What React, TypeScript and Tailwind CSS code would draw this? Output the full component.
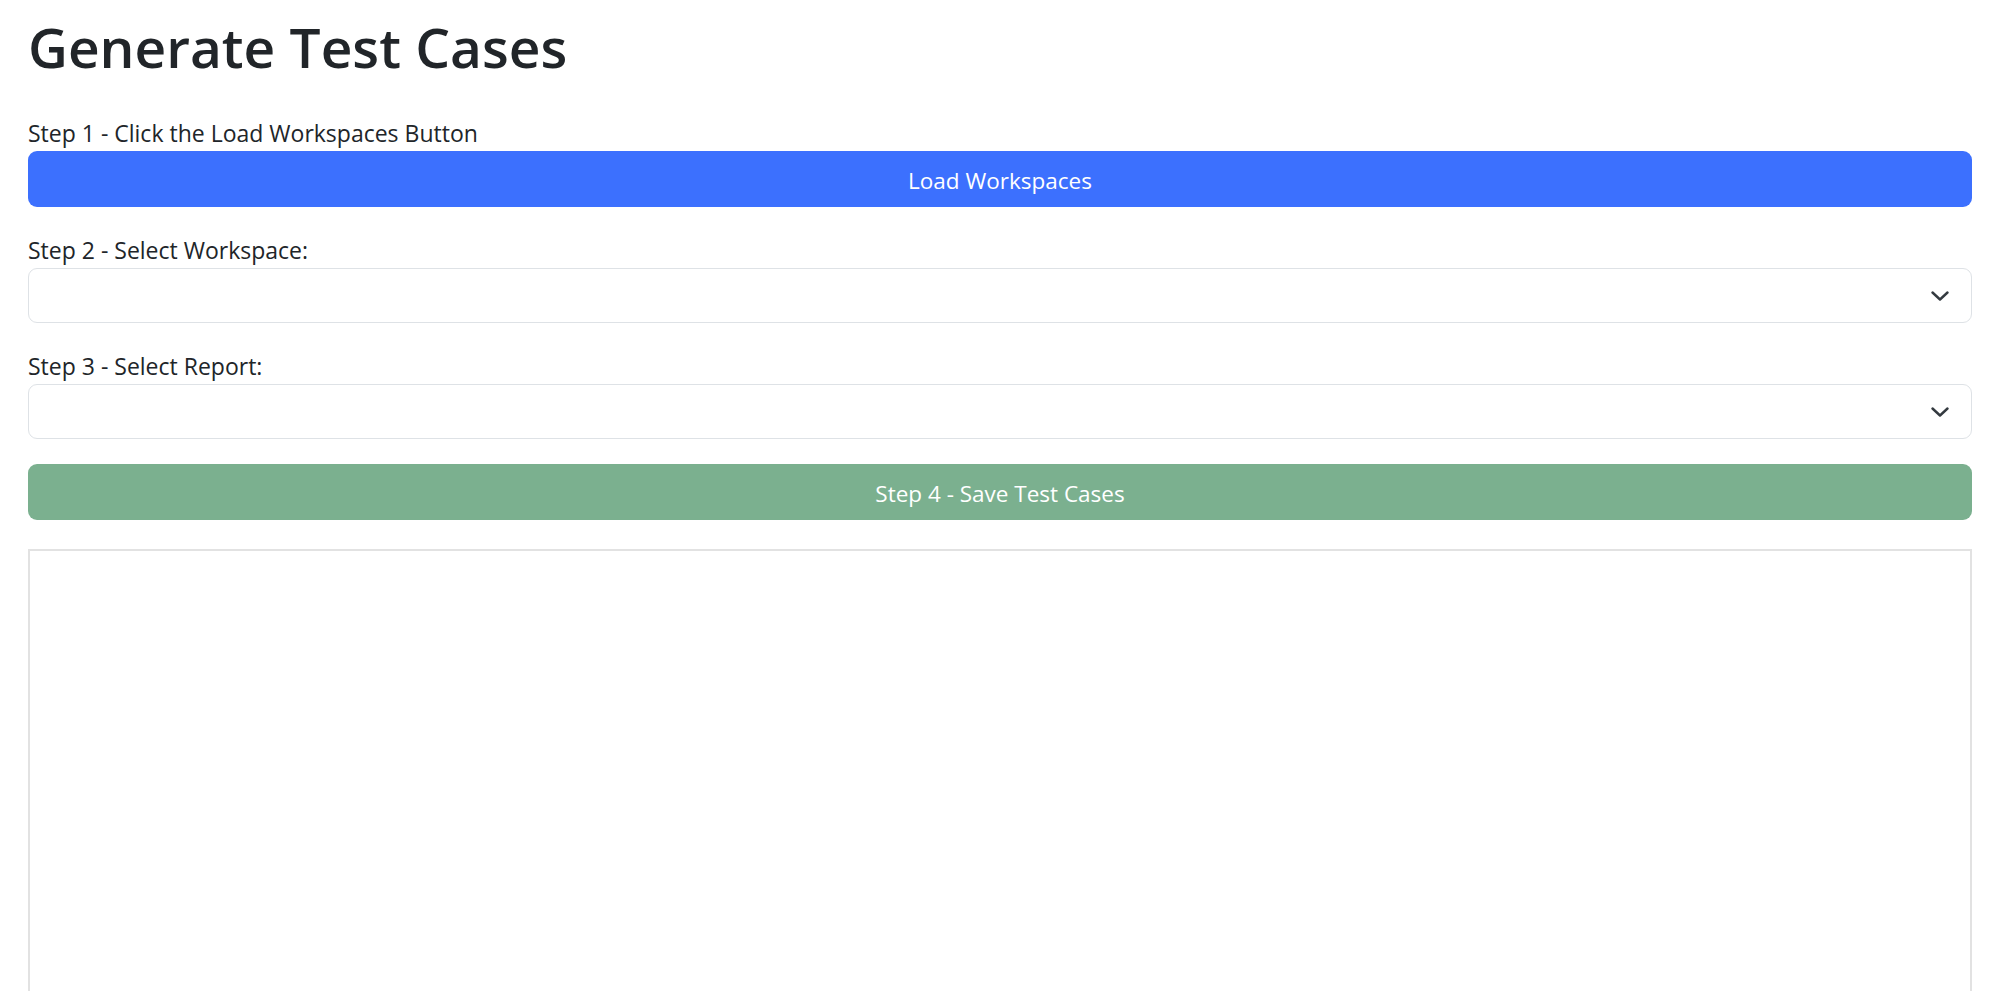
import React from "react";

function Chevron() {
	return (
		<svg width="18" height="10" viewBox="0 0 18 10" fill="none" className="shrink-0">
			<path d="M1.5 1.5 9 8.5l7.5-7" stroke="#343a40" strokeWidth="2.4" strokeLinecap="round" strokeLinejoin="round" />
		</svg>
	);
}

function SelectBox({ label }: { label: string }) {
	return (
		<div className="mt-[25px]">
			<div className="text-[23px] leading-[36px] text-[#212529]">{label}</div>
			<div className="h-[55px] border border-[#dee2e6] rounded-[9px] bg-white flex items-center justify-end pr-[22px]">
				<Chevron />
			</div>
		</div>
	);
}

export default function App() {
	return (
		<div className="min-h-screen bg-white font-['Open_Sans',sans-serif] text-[#212529]">
			<div className="ml-[28px] w-[1944px]">
				<h1 className="pt-[11px] text-[55px] leading-[72px] font-semibold text-[#212529]">
					Generate Test Cases
				</h1>
				<div className="mt-[32px]">
					<div className="text-[23px] leading-[36px]">
						Step 1 - Click the Load Workspaces Button
					</div>
					<button className="w-full h-[56px] pt-[3px] rounded-[9px] bg-[#3c70fe] text-white text-[22.5px]">
						Load Workspaces
					</button>
				</div>
				<SelectBox label="Step 2 - Select Workspace:" />
				<SelectBox label="Step 3 - Select Report:" />
				<button
					disabled
					className="mt-[25px] w-full h-[56px] pt-[3px] rounded-[9px] bg-[#7bb08f] text-white text-[22.5px]"
				>
					Step 4 - Save Test Cases
				</button>
				<div className="mt-[29px] h-[600px] border-2 border-[#e2e2e2] bg-white"></div>
			</div>
		</div>
	);
}
